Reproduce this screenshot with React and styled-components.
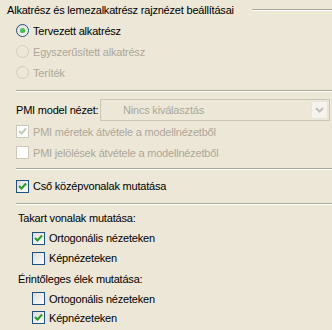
import React from "react";
import styled, { createGlobalStyle } from "styled-components";

const Global = createGlobalStyle`
    body {
        margin: 0;
        background: #ece7d7;
        font-family: "Liberation Sans", Arial, sans-serif;
        font-size: 11px;
        letter-spacing: -0.2px;
        color: #000;
    }
`;

const Panel = styled.div`
    width: 332px;
    height: 330px;
    display: flex;
    flex-direction: column;
    overflow: hidden;
`;

const GroupHeader = styled.div`
    display: flex;
    align-items: center;
    height: 20px;
    padding-left: 7px;
`;

const Etched = styled.div`
    flex: 1;
    height: 0;
    border-top: 1px solid #aca899;
    border-bottom: 1px solid #fff;
    margin-left: ${p => p.$gap || 0}px;
`;

const Separator = styled.div`
    height: 0;
    border-top: 1px solid #aca899;
    border-bottom: 1px solid #fff;
    margin: ${p => p.$top}px 0 0 16px;
`;

const Row = styled.label`
    display: flex;
    align-items: center;
    height: ${p => p.$h || 20}px;
    margin-top: ${p => p.$top || 0}px;
    padding-left: ${p => p.$indent || 16}px;
    color: ${p => (p.$disabled ? "#aca899" : "#000")};
`;

const Caption = styled.span`
    margin-left: 4px;
    white-space: nowrap;
`;

const Label = styled.div`
    display: flex;
    align-items: center;
    height: 20px;
    margin-top: ${p => p.$top || 0}px;
    padding-left: ${p => p.$indent || 18}px;
    white-space: nowrap;
`;

const RadioCircle = styled.span`
    width: 13px;
    height: 13px;
    box-sizing: border-box;
    border-radius: 50%;
    border: 1px solid ${p => (p.$disabled ? "#d2cfc2" : "#1c5180")};
    background: ${p => (p.$disabled ? "#ece7d7" : "linear-gradient(135deg, #dcdcd7, #fff)")};
    display: flex;
    align-items: center;
    justify-content: center;
    flex-shrink: 0;
`;

const Dot = styled.span`
    width: 5px;
    height: 5px;
    border-radius: 50%;
    background: radial-gradient(circle at 40% 40%, #5cd25c, #21a121);
`;

const Box = styled.span`
    width: 13px;
    height: 13px;
    box-sizing: border-box;
    border: 1px solid ${p => (p.$disabled ? "#cac8bb" : "#1c5180")};
    background: ${p => (p.$disabled ? "#fff" : "linear-gradient(135deg, #dcdcd7, #fff)")};
    display: flex;
    align-items: center;
    justify-content: center;
    flex-shrink: 0;
`;

const SelectRow = styled.div`
    display: flex;
    align-items: center;
    height: 22px;
    margin-top: 7px;
    padding-left: 16px;
`;

const SelectLabel = styled.span`
    width: 84px;
    white-space: nowrap;
`;

const Select = styled.div`
    width: 230px;
    height: 22px;
    box-sizing: border-box;
    border: 1px solid #c9c7ba;
    background: #ece7d7;
    display: flex;
    align-items: center;
    padding: 1px;
    color: #aca899;
`;

const SelectValue = styled.span`
    flex: 1;
    padding-left: 21px;
    white-space: nowrap;
`;

const ArrowButton = styled.span`
    width: 17px;
    height: 18px;
    box-sizing: border-box;
    border: 1px solid #e8e6dc;
    background: #f4f3ee;
    display: flex;
    align-items: center;
    justify-content: center;
`;

const Radio = ({ checked, disabled, children }) => (
    <Row $h={21} $disabled={disabled}>
        <RadioCircle $disabled={disabled}>{checked && <Dot />}</RadioCircle>
        <Caption>{children}</Caption>
    </Row>
);

const Check = ({ checked, disabled, indent, h, top, children }) => (
    <Row $h={h} $top={top} $indent={indent} $disabled={disabled}>
        <Box $disabled={disabled}>
            {checked && (
                <svg width="9" height="9" viewBox="0 0 9 9">
                    <path d="M1 4 L3.5 6.5 L8 1.5" fill="none"
                        stroke={disabled ? "#cac8bb" : "#21a121"} strokeWidth="2" />
                </svg>
            )}
        </Box>
        <Caption>{children}</Caption>
    </Row>
);

export default function App() {
    return <Panel>
        <Global />
        <GroupHeader>
            <span>Alkatrész és lemezalkatrész rajznézet beállításai</span>
            <Etched $gap={18} />
        </GroupHeader>
        <Radio checked>Tervezett alkatrész</Radio>
        <Radio disabled>Egyszerűsített alkatrész</Radio>
        <Radio disabled>Teríték</Radio>
        <Separator $top={7} />
        <SelectRow>
            <SelectLabel>PMI model nézet:</SelectLabel>
            <Select>
                <SelectValue>Nincs kiválasztás</SelectValue>
                <ArrowButton>
                    <svg width="9" height="6" viewBox="0 0 9 6">
                        <path d="M1 1 L4.5 4.5 L8 1" fill="none" stroke="#c5c2b2" strokeWidth="2" />
                    </svg>
                </ArrowButton>
            </Select>
        </SelectRow>
        <Check checked disabled h={21}>PMI méretek átvétele a modellnézetből</Check>
        <Check disabled h={21}>PMI jelölések átvétele a modellnézetből</Check>
        <Separator $top={5} />
        <Check checked top={6}>Cső középvonalak mutatása</Check>
        <Separator $top={7} />
        <Label $top={3}>Takart vonalak mutatása:</Label>
        <Check checked indent={32}>Ortogonális nézeteken</Check>
        <Check indent={32}>Képnézeteken</Check>
        <Label $top={1}>Érintőleges élek mutatása:</Label>
        <Check indent={32} h={19}>Ortogonális nézeteken</Check>
        <Check checked indent={32} h={19}>Képnézeteken</Check>
    </Panel>;
}
